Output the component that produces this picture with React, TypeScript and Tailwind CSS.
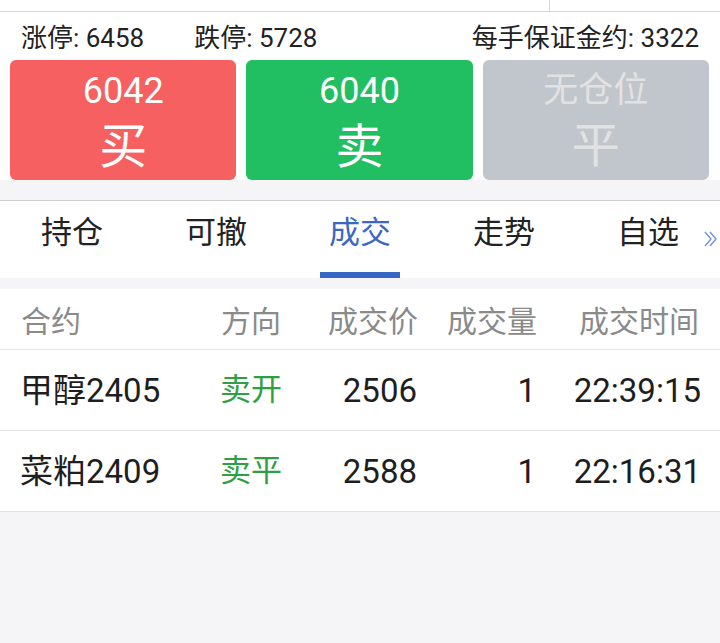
import React from "react";

const FONT = { fontFamily: 'Roboto, "Noto Sans CJK SC", sans-serif' };

const tabs = ["持仓", "可撤", "成交", "走势", "自选"];

const rows = [
  { name: "甲醇2405", dir: "卖开", price: "2506", qty: "1", time: "22:39:15" },
  { name: "菜粕2409", dir: "卖平", price: "2588", qty: "1", time: "22:16:31" },
];

export default function App() {
  return (
    <div className="w-[720px] h-[643px] bg-[#f5f5f7] overflow-hidden" style={FONT}>
      {/* top bar remnant */}
      <div className="h-[12px] bg-white border-b border-[#d6d6d6] flex">
        <div className="w-[550px] border-r border-[#d6d6d6]" />
      </div>

      {/* info row */}
      <div className="h-[48px] bg-white flex items-center justify-between pl-[21px] pr-[21px] pt-[4px] text-[26px] text-[#222]">
        <div className="flex gap-[50px]">
          <span>涨停: 6458</span>
          <span>跌停: 5728</span>
        </div>
        <span>每手保证金约: 3322</span>
      </div>

      {/* buttons */}
      <div className="bg-white flex gap-[10px] pl-[10px] pr-[11px]">
        <div className="flex-1 h-[120px] rounded-[6px] bg-[#f66060] flex flex-col items-center text-white">
          <span className="text-[36px] leading-none mt-[13px]">6042</span>
          <span className="text-[48px] leading-none mt-[14px]">买</span>
        </div>
        <div className="flex-1 h-[120px] rounded-[6px] bg-[#21bf62] flex flex-col items-center text-white">
          <span className="text-[36px] leading-none mt-[13px]">6040</span>
          <span className="text-[48px] leading-none mt-[14px]">卖</span>
        </div>
        <div className="flex-1 h-[120px] rounded-[6px] bg-[#c1c6cd] flex flex-col items-center text-[#e2e2e2]">
          <span className="text-[35px] leading-none mt-[13px]">无仓位</span>
          <span className="text-[48px] leading-none mt-[14px]">平</span>
        </div>
      </div>

      {/* gray spacer */}
      <div className="h-[21px] border-b border-[#cfcfd3]" />

      {/* tabs */}
      <div className="h-[77px] bg-white flex relative">
        {tabs.map((t, i) => (
          <div key={t} className="w-[144px] flex flex-col items-center">
            <span
              className={
                "text-[31px] leading-none mt-[16px] " +
                (i === 2 ? "text-[#3a68c4]" : "text-[#222]")
              }
            >
              {t}
            </span>
            <div className="flex-1" />
            {i === 2 && <div className="w-[80px] h-[6px] bg-[#3766c4]" />}
          </div>
        ))}
        <svg
          className="absolute right-[2px] top-[29px]"
          width="14"
          height="18"
          viewBox="0 0 14 18"
          fill="none"
          stroke="#6a8fd8"
          strokeWidth="1.3"
        >
          <path d="M1 2 L7 9 L1 16" />
          <path d="M6 2 L12 9 L6 16" />
        </svg>
      </div>

      {/* gray spacer */}
      <div className="h-[11px]" />

      {/* table header */}
      <div className="h-[61px] bg-white border-b border-[#e2e2e2] grid grid-cols-[200px_60px_137px_119px_1fr] items-center pl-[21px] pr-[21px] pt-[4px] text-[30px] text-[#8a8a8a]">
        <span>合约</span>
        <span className="text-right">方向</span>
        <span className="text-right">成交价</span>
        <span className="text-right">成交量</span>
        <span className="text-right">成交时间</span>
      </div>

      {rows.map((r) => (
        <div
          key={r.name}
          className="h-[81px] bg-white border-b border-[#e2e2e2] grid grid-cols-[200px_60px_137px_119px_1fr] items-center pl-[20px] pr-[19px] pt-[1px] text-[33px] text-[#1e1e1e]"
        >
          <span className="whitespace-nowrap">{r.name}</span>
          <span className="text-right text-[31px] text-[#2ea043] whitespace-nowrap">{r.dir}</span>
          <span className="text-right">{r.price}</span>
          <span className="text-right">{r.qty}</span>
          <span className="text-right">{r.time}</span>
        </div>
      ))}
    </div>
  );
}
